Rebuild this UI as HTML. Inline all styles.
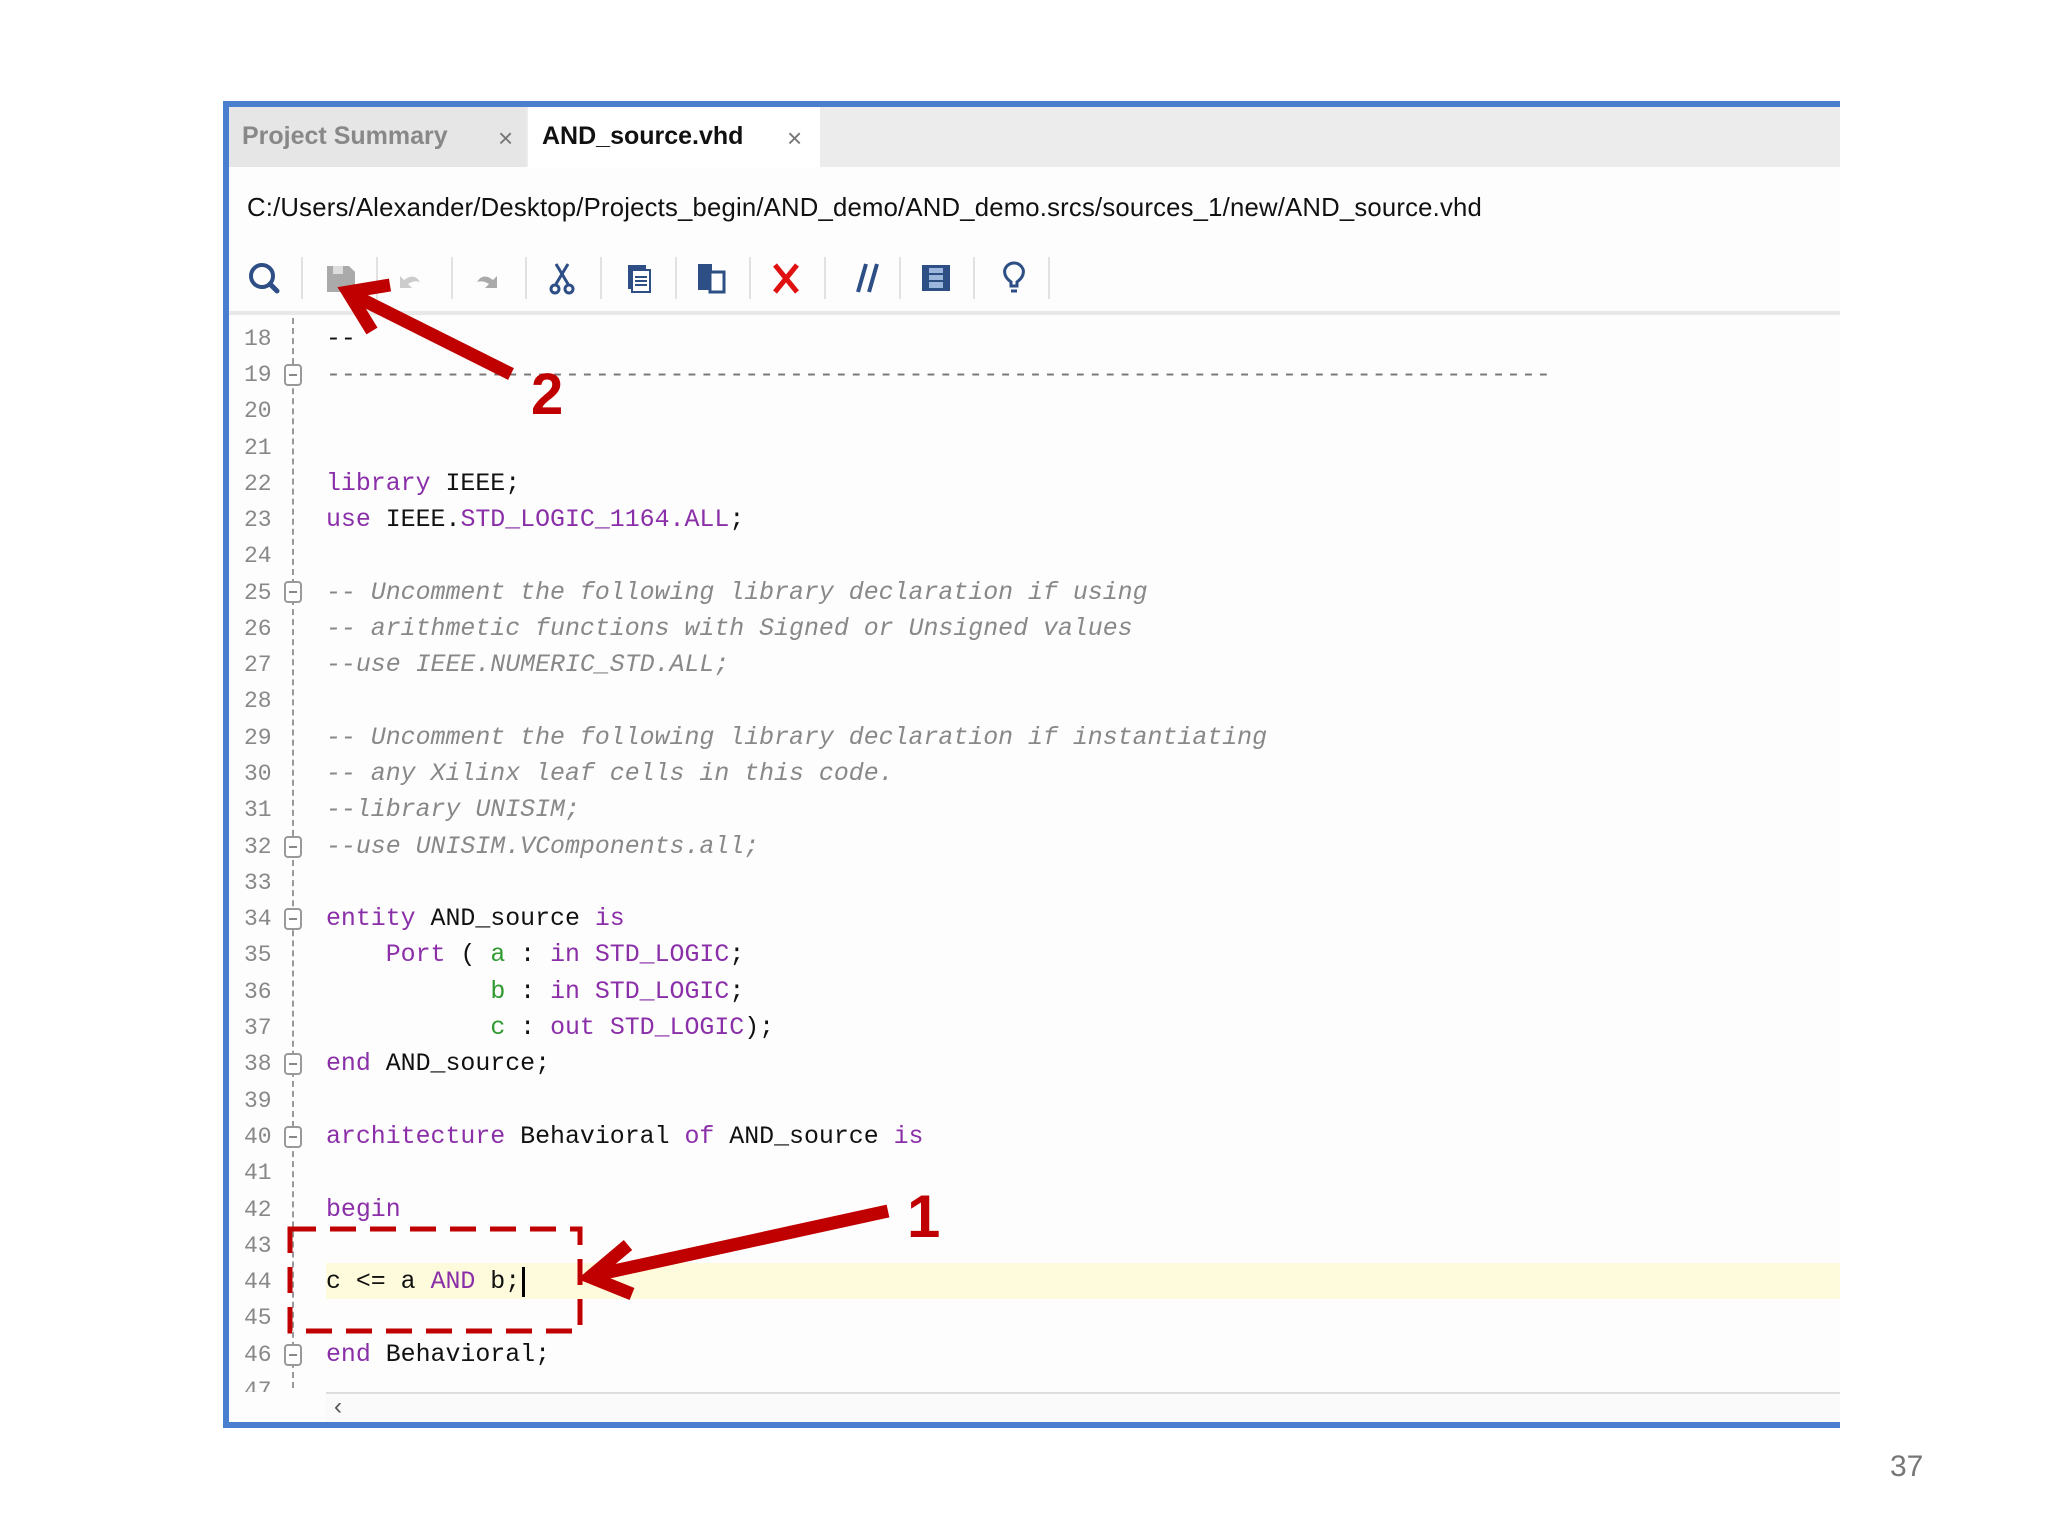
<!DOCTYPE html>
<html><head><meta charset="utf-8"><style>
*{margin:0;padding:0;box-sizing:border-box}
body{width:2048px;height:1536px;background:#fff;position:relative;overflow:hidden;font-family:"Liberation Sans",sans-serif}
.abs{position:absolute}
.frame{left:223px;top:101px;width:1617px;height:1327px;border-top:6px solid #4a7fcf;border-left:6px solid #4a7fcf;border-bottom:6px solid #4a7fcf;background:#fdfdfd}
.tabbar{left:229px;top:107px;width:1611px;height:60px;background:#ececec}
.tab1{left:229px;top:107px;width:297px;height:60px;background:#e6e6e6}
.tab2{left:528px;top:107px;width:292px;height:60px;background:#fff}
.tabt{font-size:25px;font-weight:bold;top:122px}
.cl{font-size:26px;color:#777;top:123px}
.path{left:247px;top:194px;font-size:25.7px;color:#111;white-space:nowrap;letter-spacing:0.2px}
.sep{top:257px;width:2px;height:42px;background:#e2e2e2}
.tbl{left:229px;top:311px;width:1611px;height:4px;background:#e8e8e8}
.ln{left:244px;width:40px;text-align:left;font-family:"Liberation Mono",monospace;font-size:23px;color:#888;height:36px;line-height:36px}
.code{left:326px;font-family:"Liberation Mono",monospace;font-size:24.9px;height:36px;line-height:36px;white-space:pre;color:#111}
.k{color:#8a2fa8}.g{color:#2f9a2f}.c{color:#888;font-style:italic}
.gut{left:292px;top:318px;width:0;height:1070px;border-left:2px dashed #999}
.fold{left:284px;width:18px;height:22px;border:2px solid #999;border-radius:4px;background:#fff}
.fold:after{content:"";position:absolute;left:3px;top:8px;width:8px;height:2px;background:#888}
.lines{position:absolute;left:0;top:3px;width:2048px;height:1400px}
</style></head><body>
<div class="abs frame"></div>
<div class="abs tabbar"></div>
<div class="abs tab1"></div>
<div class="abs tab2"></div>
<div class="abs tabt" style="left:242px;color:#888">Project Summary</div>
<div class="abs cl" style="left:498px">×</div>
<div class="abs tabt" style="left:542px;color:#111">AND_source.vhd</div>
<div class="abs cl" style="left:787px">×</div>
<div class="abs path">C:/Users/Alexander/Desktop/Projects_begin/AND_demo/AND_demo.srcs/sources_1/new/AND_source.vhd</div>

<svg class="abs" style="left:229px;top:250px" width="900" height="60" viewBox="229 250 900 60">
 <g fill="none" stroke-linecap="round">
  <circle cx="262" cy="276" r="11" stroke="#2d4f86" stroke-width="4"/>
  <line x1="270" y1="284" x2="277" y2="291" stroke="#2d4f86" stroke-width="5"/>
 </g>
 <path d="M327 266h22l6 6v20h-28z" fill="#aaa"/><rect x="333" y="266" width="10" height="8" fill="#ddd"/>
 <path d="M420 282q-6-10-16-2l-4-4v12h12l-4-4q6-4 12-2z" fill="#ccc"/>
 <path d="M477 282q6-10 16-2l4-4v12h-12l4-4q-6-4-12-2z" fill="#aaa"/>
 <g stroke="#2d4f86" stroke-width="3" fill="none"><line x1="556" y1="264" x2="568" y2="284"/><line x1="568" y1="264" x2="556" y2="284"/><circle cx="555" cy="289" r="4"/><circle cx="569" cy="289" r="4"/></g>
 <rect x="628" y="265" width="18" height="24" fill="#2d4f86"/><rect x="632" y="270" width="18" height="22" fill="#fff" stroke="#2d4f86" stroke-width="2"/><g stroke="#2d4f86" stroke-width="2"><line x1="635" y1="277" x2="647" y2="277"/><line x1="635" y1="281" x2="647" y2="281"/><line x1="635" y1="285" x2="647" y2="285"/></g>
 <rect x="698" y="264" width="14" height="26" fill="#2d4f86"/><rect x="710" y="272" width="14" height="20" fill="#fff" stroke="#2d4f86" stroke-width="3"/>
 <g stroke="#e01010" stroke-width="5"><line x1="775" y1="265" x2="797" y2="292"/><line x1="797" y1="265" x2="775" y2="292"/></g>
 <g stroke="#2d4f86" stroke-width="4"><line x1="858" y1="292" x2="866" y2="264"/><line x1="869" y1="292" x2="877" y2="264"/></g>
 <rect x="922" y="265" width="28" height="26" fill="#2d4f86"/><rect x="929" y="268" width="14" height="20" fill="#9db6dc"/><g stroke="#2d4f86" stroke-width="2"><line x1="929" y1="274" x2="943" y2="274"/><line x1="929" y1="281" x2="943" y2="281"/></g>
 <path d="M1011 286v-4q-8-6-6-13 3-6 9-6t9 6q2 7-6 13v4z" fill="none" stroke="#2d4f86" stroke-width="3"/><line x1="1011" y1="291" x2="1017" y2="291" stroke="#2d4f86" stroke-width="3"/>
</svg>
<div class="abs sep" style="left:301px"></div><div class="abs sep" style="left:376px"></div><div class="abs sep" style="left:451px"></div><div class="abs sep" style="left:525px"></div><div class="abs sep" style="left:600px"></div><div class="abs sep" style="left:675px"></div><div class="abs sep" style="left:749px"></div><div class="abs sep" style="left:824px"></div><div class="abs sep" style="left:899px"></div><div class="abs sep" style="left:973px"></div><div class="abs sep" style="left:1048px"></div>
<div class="abs tbl"></div>

<div class="abs" style="left:326px;top:1263px;width:1514px;height:36px;background:#fdfbdc"></div>
<div class="abs gut"></div>

<div class="lines">
<div class="abs ln" style="top:318px">18</div><div class="abs code" style="top:318px">--</div>
<div class="abs ln" style="top:354px">19</div><div class="abs code" style="top:354px;color:#777">----------------------------------------------------------------------------------</div>
<div class="abs ln" style="top:390px">20</div>
<div class="abs ln" style="top:427px">21</div>
<div class="abs ln" style="top:463px">22</div><div class="abs code" style="top:463px"><span class="k">library</span> IEEE;</div>
<div class="abs ln" style="top:499px">23</div><div class="abs code" style="top:499px"><span class="k">use</span> IEEE.<span class="k">STD_LOGIC_1164.ALL</span>;</div>
<div class="abs ln" style="top:535px">24</div>
<div class="abs ln" style="top:572px">25</div><div class="abs code c" style="top:572px">-- Uncomment the following library declaration if using</div>
<div class="abs ln" style="top:608px">26</div><div class="abs code c" style="top:608px">-- arithmetic functions with Signed or Unsigned values</div>
<div class="abs ln" style="top:644px">27</div><div class="abs code c" style="top:644px">--use IEEE.NUMERIC_STD.ALL;</div>
<div class="abs ln" style="top:680px">28</div>
<div class="abs ln" style="top:717px">29</div><div class="abs code c" style="top:717px">-- Uncomment the following library declaration if instantiating</div>
<div class="abs ln" style="top:753px">30</div><div class="abs code c" style="top:753px">-- any Xilinx leaf cells in this code.</div>
<div class="abs ln" style="top:789px">31</div><div class="abs code c" style="top:789px">--library UNISIM;</div>
<div class="abs ln" style="top:826px">32</div><div class="abs code c" style="top:826px">--use UNISIM.VComponents.all;</div>
<div class="abs ln" style="top:862px">33</div>
<div class="abs ln" style="top:898px">34</div><div class="abs code" style="top:898px"><span class="k">entity</span> AND_source <span class="k">is</span></div>
<div class="abs ln" style="top:934px">35</div><div class="abs code" style="top:934px">    <span class="k">Port</span> ( <span class="g">a</span> : <span class="k">in</span> <span class="k">STD_LOGIC</span>;</div>
<div class="abs ln" style="top:971px">36</div><div class="abs code" style="top:971px">           <span class="g">b</span> : <span class="k">in</span> <span class="k">STD_LOGIC</span>;</div>
<div class="abs ln" style="top:1007px">37</div><div class="abs code" style="top:1007px">           <span class="g">c</span> : <span class="k">out</span> <span class="k">STD_LOGIC</span>);</div>
<div class="abs ln" style="top:1043px">38</div><div class="abs code" style="top:1043px"><span class="k">end</span> AND_source;</div>
<div class="abs ln" style="top:1080px">39</div>
<div class="abs ln" style="top:1116px">40</div><div class="abs code" style="top:1116px"><span class="k">architecture</span> Behavioral <span class="k">of</span> AND_source <span class="k">is</span></div>
<div class="abs ln" style="top:1152px">41</div>
<div class="abs ln" style="top:1189px">42</div><div class="abs code" style="top:1189px"><span class="k">begin</span></div>
<div class="abs ln" style="top:1225px">43</div>
<div class="abs ln" style="top:1261px">44</div><div class="abs code" style="top:1261px">c &lt;= a <span class="k">AND</span> b;</div>
<div class="abs" style="left:522px;top:1264px;width:3px;height:30px;background:#000"></div>
<div class="abs ln" style="top:1297px">45</div>
<div class="abs ln" style="top:1334px">46</div><div class="abs code" style="top:1334px"><span class="k">end</span> Behavioral;</div>
<div class="abs ln" style="top:1370px;height:19px;overflow:hidden">47</div>

<div class="abs fold" style="top:361px"></div>
<div class="abs fold" style="top:578px"></div>
<div class="abs fold" style="top:833px"></div>
<div class="abs fold" style="top:905px"></div>
<div class="abs fold" style="top:1050px"></div>
<div class="abs fold" style="top:1123px"></div>
<div class="abs fold" style="top:1341px"></div>
</div>

<div class="abs" style="left:326px;top:1392px;width:1514px;height:30px;background:#fafafa;border-top:2px solid #ddd"></div>
<div class="abs" style="left:334px;top:1393px;font-size:24px;color:#555">‹</div>

<svg class="abs" style="left:0;top:0" width="2048" height="1536">
 <rect x="290" y="1229" width="290" height="102" fill="none" stroke="#c00000" stroke-width="5" stroke-dasharray="26,14"/>
 <g stroke="#c00000" stroke-width="13" fill="none" stroke-linecap="butt">
  <line x1="888" y1="1211" x2="600" y2="1274"/>
  <polyline points="628,1245 590,1277 632,1294" stroke-linejoin="miter"/>
  <line x1="511" y1="374" x2="355" y2="296"/>
  <polyline points="390,285 348,292 372,331" stroke-linejoin="miter"/>
 </g>
 <text x="907" y="1237" font-family="Liberation Sans" font-weight="bold" font-size="60" fill="#c00000">1</text>
 <text x="531" y="414" font-family="Liberation Sans" font-weight="bold" font-size="58" fill="#c00000">2</text>
 <text x="1890" y="1476" font-family="Liberation Sans" font-size="30" fill="#777">37</text>
</svg>
</body></html>
